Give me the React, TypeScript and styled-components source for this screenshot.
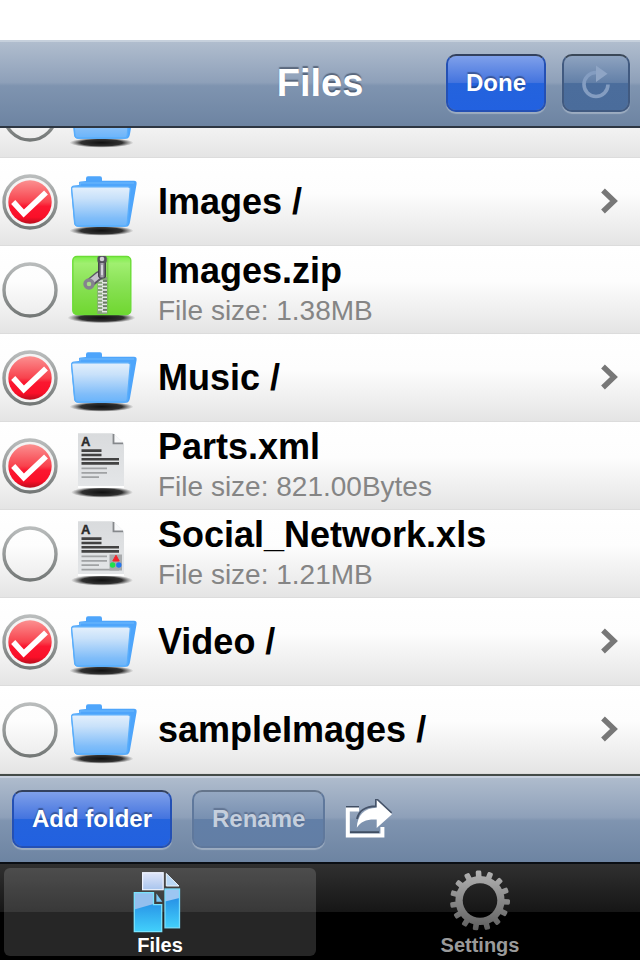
import React, { useState } from "react";
import styled, { createGlobalStyle, css } from "styled-components";

const GlobalStyle = createGlobalStyle`
  * { box-sizing: border-box; }
  body { margin: 0; background: #fff; font-family: "Liberation Sans", Arial, sans-serif; }
  button, input { font-family: inherit; margin: 0; }
`;

const barGradient = css`
  background: linear-gradient(#b0bdce 0%, #8ea0b9 48%, #7f94b0 52%, #6d84a2 100%);
`;

const Screen = styled.div`
  display: flex;
  flex-direction: column;
  height: 100vh;
  padding-top: 40px;
`;

const NavBar = styled.header`
  ${barGradient}
  flex: none;
  display: grid;
  grid-template-columns: 1fr auto 1fr;
  align-items: center;
  height: 88px;
  padding: 0 10px 2px;
  border-top: 2px solid #c6d0dc;
  border-bottom: 2px solid #2d3642;
`;

const Title = styled.h1`
  grid-column: 2;
  margin: 0;
  font-size: 38px;
  line-height: 44px;
  color: #fff;
  text-shadow: 0 -2px 1px rgba(50, 62, 82, 0.6);
`;

const NavActions = styled.div`
  display: flex;
  justify-content: flex-end;
  gap: 16px;
`;

type Tone = "primary" | "plain";

const BarButton = styled.button<{ $tone: Tone; $compact?: boolean }>`
  display: flex;
  align-items: center;
  justify-content: center;
  height: 58px;
  padding: ${(p) => (p.$compact ? "0 17px" : "0 18px")};
  border: 2px solid ${(p) => (p.$tone === "primary" ? "#2450b4" : "#415a80")};
  border-top-color: ${(p) => (p.$tone === "primary" ? "#33415e" : "#3b4858")};
  border-radius: 10px;
  background: ${(p) =>
    p.$tone === "primary"
      ? "linear-gradient(#7fa0ea 0%, #4474df 49%, #2463dd 51%, #2261e0 100%)"
      : "linear-gradient(#8ea3c0 0%, #6380a8 49%, #4b6d9c 51%, #4a6c9b 100%)"};
  background-clip: padding-box;
  box-shadow: 0 2px 1px rgba(255, 255, 255, 0.3);
  color: #fff;
  font-size: 24px;
  font-weight: bold;
  line-height: 28px;
  text-shadow: 0 -2px 1px rgba(30, 45, 80, 0.5);

  &:disabled {
    border-color: #5f789c;
    border-top-color: #65758b;
    background: linear-gradient(#95a8c2 0%, #7890b1 49%, #627fa7 51%, #627ea5 100%);
    background-clip: padding-box;
    color: #c5cfdd;
    text-shadow: 0 -2px 1px rgba(50, 65, 95, 0.4);
  }
`;

const FileList = styled.ul`
  flex: 1;
  min-height: 0;
  display: flex;
  flex-direction: column;
  justify-content: flex-end;
  overflow: hidden;
  margin: 0;
  padding: 0;
  list-style: none;
`;

const Row = styled.li`
  flex: none;
  display: grid;
  grid-template-columns: 56px 74px 1fr auto;
  column-gap: 8px;
  align-items: center;
  height: 88px;
  padding: 0 20px 0 2px;
  background: linear-gradient(#fff 0%, #fdfdfd 40%, #e4e4e4 100%);
  box-shadow: inset 0 -1px 0 #dcdcdc;
`;

const CheckCell = styled.span`
  display: grid;

  & > * { grid-area: 1 / 1; }
`;

const CheckInput = styled.input`
  appearance: none;
  width: 56px;
  height: 56px;
  border-radius: 50%;
`;

const CheckFace = styled.svg`
  pointer-events: none;
`;

const RowText = styled.label`
  display: flex;
  flex-direction: column;
  gap: 2px;
  padding-left: 10px;
  white-space: nowrap;
`;

const FileName = styled.span`
  font-size: 36px;
  font-weight: bold;
  line-height: 40px;
  color: #000;
`;

const FileSize = styled.span`
  font-size: 28px;
  line-height: 36px;
  color: #858585;
`;

const Toolbar = styled.div`
  ${barGradient}
  flex: none;
  display: flex;
  align-items: center;
  gap: 20px;
  height: 90px;
  padding: 0 12px;
  border-top: 2px solid #444b48;
  border-bottom: 2px solid #0a0e14;
  box-shadow: inset 0 2px 0 #c8d1df;
`;

const IconButton = styled.button`
  display: flex;
  padding: 0;
  border: 0;
  background: none;
`;

const TabBar = styled.nav`
  flex: none;
  display: grid;
  grid-template-columns: 1fr 1fr;
  height: 96px;
  background: linear-gradient(#303030 0%, #161616 50%, #000 50%, #000 100%);
`;

const Tab = styled.a<{ $active: boolean }>`
  display: flex;
  flex-direction: column;
  align-items: center;
  margin: 4px;
  padding-top: 2px;
  border-radius: 6px;
  background: ${(p) => (p.$active ? "rgba(255, 255, 255, 0.15)" : "none")};
  color: ${(p) => (p.$active ? "#fff" : "#9a9a9a")};
  font-size: 20px;
  font-weight: bold;
  line-height: 22px;
  text-decoration: none;
`;

const Defs = () => (
  <svg width="0" height="0" display="block" aria-hidden="true">
    <defs>
      <linearGradient id="ring" x1="0" y1="0" x2="0" y2="1">
        <stop offset="0" stopColor="#b9bcbc" />
        <stop offset="1" stopColor="#747877" />
      </linearGradient>
      <linearGradient id="red" x1="0" y1="0" x2="0" y2="1">
        <stop offset="0" stopColor="#fb9090" />
        <stop offset="0.5" stopColor="#f8424d" />
        <stop offset="0.6" stopColor="#fb1730" />
        <stop offset="0.85" stopColor="#fa0f28" />
        <stop offset="1" stopColor="#b80d1c" />
      </linearGradient>
      <linearGradient id="folderFront" x1="0" y1="0" x2="0" y2="1">
        <stop offset="0" stopColor="#e4f0fc" />
        <stop offset="0.3" stopColor="#c8e1fa" />
        <stop offset="0.8" stopColor="#80bdf9" />
        <stop offset="1" stopColor="#6ab4fb" />
      </linearGradient>
      <radialGradient id="shadow">
        <stop offset="0" stopColor="#111" />
        <stop offset="0.65" stopColor="#1c1c1c" stopOpacity="0.9" />
        <stop offset="1" stopColor="#444" stopOpacity="0" />
      </radialGradient>
      <linearGradient id="zipBody" x1="0" y1="0" x2="0" y2="1">
        <stop offset="0" stopColor="#7df04a" />
        <stop offset="0.12" stopColor="#a0ef70" />
        <stop offset="0.5" stopColor="#88e154" />
        <stop offset="1" stopColor="#70d731" />
      </linearGradient>
      <linearGradient id="metal" x1="0" y1="0" x2="1" y2="0">
        <stop offset="0" stopColor="#494653" />
        <stop offset="0.5" stopColor="#bbb8c2" />
        <stop offset="1" stopColor="#3c3844" />
      </linearGradient>
      <linearGradient id="paper" x1="0" y1="0" x2="0" y2="1">
        <stop offset="0" stopColor="#d9dbdd" />
        <stop offset="1" stopColor="#e4e6e8" />
      </linearGradient>
      <linearGradient id="gear" x1="0" y1="0" x2="0" y2="1">
        <stop offset="0" stopColor="#b4b4b4" />
        <stop offset="1" stopColor="#5c5c5c" />
      </linearGradient>
      <linearGradient id="pageBlue" x1="0" y1="0" x2="0" y2="1">
        <stop offset="0" stopColor="#1f7fe0" />
        <stop offset="1" stopColor="#42d0fb" />
      </linearGradient>
      <linearGradient id="pageLight" x1="0" y1="0" x2="0" y2="1">
        <stop offset="0" stopColor="#dfe5f8" />
        <stop offset="1" stopColor="#a9c5ee" />
      </linearGradient>
    </defs>
  </svg>
);

const CheckGraphic = ({ on }: { on: boolean }) => (
  <CheckFace width="56" height="56" viewBox="0 0 56 56" aria-hidden="true">
    <circle cx="28" cy="28" r="26" fill={on ? "#f4f4f4" : "none"} stroke="url(#ring)" strokeWidth="3.4" />
    {on && (
      <>
        <circle cx="28" cy="28" r="21.7" fill="url(#red)" />
        <path d="M11.2 28 L21.7 39.5 L44 18.5" fill="none" stroke="#fff" strokeWidth="5.6" />
      </>
    )}
  </CheckFace>
);

const FolderIcon = () => (
  <svg width="74" height="88" viewBox="0 0 74 88" aria-hidden="true">
    <ellipse cx="35.5" cy="72.7" rx="32" ry="5" fill="url(#shadow)" />
    <path
      d="M5 31 Q5 27.5 8 27.5 L13 27 V24.5 Q13 23.5 15 23.5 L20 23 V20.5 Q20 18.3 22 18.3 H34 Q36 18.3 36 20.5 V22.7 H68 Q71 22.7 70.6 26 L64 64 Q63.3 68.7 60 68.7 H12 Q8.5 68.7 8 65 Z"
      fill="#4ea5fb"
    />
    <path d="M14 27.5 V25 H68" fill="none" stroke="#6fbafd" strokeWidth="1" />
    <path
      d="M5.7 31 Q5.3 28.8 8 28.8 H62 Q64.6 28.8 64.2 31.5 L61.3 65 Q61 68 58.5 68 H12 Q9.2 68 8.9 65 Z"
      fill="url(#folderFront)"
      stroke="#5aaefb"
      strokeWidth="1.3"
    />
  </svg>
);

const teeth = Array.from({ length: 9 }, (_, i) => 35 + i * 3.6);

const ZipIcon = () => (
  <svg width="74" height="88" viewBox="0 0 74 88" aria-hidden="true">
    <ellipse cx="35.5" cy="71.8" rx="34" ry="5.4" fill="url(#shadow)" />
    <rect x="6.8" y="10.5" width="58" height="58" rx="4" fill="url(#zipBody)" stroke="#6bdc35" strokeWidth="1.4" />
    <path d="M41.8 12 V68" stroke="#6bc83d" strokeWidth="1" />
    <path d="M36.3 31 V68" stroke="#87a47a" strokeWidth="10" />
    {teeth.map((y) => (
      <g key={y} strokeWidth="1.6">
        <path d={`M32 ${y} H37`} stroke="#e4e6e4" />
        <path d={`M36 ${y + 1.8} H41`} stroke="#e4e6e4" />
        <path d={`M37 ${y} H41`} stroke="#6c7669" />
      </g>
    ))}
    <path d="M33 29.5 L24.5 36.5" stroke="#5b5864" strokeWidth="9" strokeLinecap="round" />
    <path d="M32.5 29.5 L24.5 36" stroke="#c4c2cb" strokeWidth="5.5" strokeLinecap="round" />
    <circle cx="23" cy="38" r="4" fill="#a5dd84" stroke="#85828e" strokeWidth="3.4" />
    <rect x="32.6" y="13" width="7" height="19" rx="2" fill="url(#metal)" stroke="#3f3b47" />
    <rect x="31.4" y="10" width="9.4" height="7" rx="2" fill="#55515e" />
    <circle cx="36" cy="13" r="2.3" fill="#d0ced6" />
    <path d="M36 19 V29" stroke="#e5e3ea" strokeWidth="1.5" />
  </svg>
);

const DocumentIcon = ({ chart }: { chart: boolean }) => (
  <svg width="74" height="88" viewBox="0 0 74 88" aria-hidden="true">
    <ellipse cx="36" cy="70.3" rx="31" ry="5.4" fill="url(#shadow)" />
    <path d="M12 11.3 H47 L58 21.3 V66 H12 Z" fill="url(#paper)" />
    <path d="M12 65 H58" stroke="#fff" strokeWidth="2" />
    <path d="M47 11.3 L58 21.3 H47 Z" fill="#f8f9fa" />
    <path d="M47.5 12 V21.3 H57" fill="none" stroke="#85888b" strokeWidth="1.8" />
    <text x="15" y="24" fontFamily="Liberation Sans, sans-serif" fontSize="13" fontWeight="bold" fill="#2b2b2b" stroke="#2b2b2b" strokeWidth="0.4">
      A
    </text>
    <path d="M15.5 28.6 H35.5 M15.5 33 H35.5 M15.5 37.2 H53 M15.5 41.4 H53" stroke="#424242" strokeWidth="2.6" />
    <path d="M15.5 46.3 H41 M15.5 50.8 H41 M15.5 55.2 H33" stroke="#a0a2a4" strokeWidth="1.7" />
    {chart && (
      <>
        <path d="M15.5 59.6 H53" stroke="#a0a2a4" strokeWidth="1.7" />
        <rect x="43.5" y="44.5" width="12.5" height="16" fill="#a8aaac" />
        <path d="M50 45.2 L53.2 51 H46.8 Z" fill="#f3222a" stroke="#f3222a" strokeWidth="1" strokeLinejoin="round" />
        <circle cx="46.6" cy="55" r="2.7" fill="#1fe04a" />
        <circle cx="52.8" cy="55" r="2.7" fill="#2476f0" />
      </>
    )}
  </svg>
);

const Chevron = () => (
  <svg width="20" height="28" viewBox="0 0 20 28" aria-hidden="true">
    <path d="M3 2.5 L14 13 L3 23.5" fill="none" stroke="#777" strokeWidth="5.4" />
  </svg>
);

const RefreshIcon = () => (
  <svg width="30" height="36" viewBox="0 0 30 36" aria-hidden="true">
    <path d="M27 19.5 A12 12 0 1 1 15 7.5" fill="none" stroke="#849dc1" strokeWidth="3.6" />
    <path d="M15 0.5 L26.5 8.7 L15 17 Z" fill="#8fa5c5" />
  </svg>
);

const ShareIcon = () => (
  <svg width="48" height="40" viewBox="0 0 48 40" aria-hidden="true">
    <path d="M14 8 H1 M5 33.2 H34" fill="none" stroke="#3f4d62" strokeWidth="2" />
    <path d="M12 20 C14 11 20 7.5 31 7.2 V-0.5 L46.5 14" fill="none" stroke="#46546a" strokeWidth="2" />
    <path d="M14 10.5 H2.8 V36.4 H37.4 V28" fill="none" stroke="#fff" strokeWidth="4" />
    <path d="M31.7 1 L47 15.2 L31.7 29 V20.5 C22 20 16 22 11.8 28.8 C12.5 16.5 19 9 31.7 8.8 Z" fill="#fff" />
  </svg>
);

const FilesIcon = () => (
  <svg width="56" height="64" viewBox="0 0 56 64" aria-hidden="true">
    <rect x="10.6" y="2.7" width="20.6" height="17" fill="url(#pageLight)" stroke="#eef3ff" strokeWidth="1.2" />
    <path d="M34.3 3.5 L47 16 H34.3 Z" fill="#b9d8f6" stroke="#e8f5ff" />
    <rect x="33" y="19" width="14.5" height="38.8" fill="url(#pageBlue)" />
    <path d="M33 19 H47.5 V28 L33 31.5 Z" fill="#9cc6f2" />
    <rect x="33" y="19" width="14.5" height="38.8" fill="none" stroke="#79dcfb" strokeWidth="1.3" />
    <path d="M2.3 22.6 H21.5 V34.6 H29.7 V61.6 H2.3 Z" fill="url(#pageBlue)" />
    <path d="M2.3 22.6 H21.5 V34 L2.3 39.5 Z" fill="#93bfee" />
    <path d="M2.3 22.6 H21.5 V34.6 H29.7 V61.6 H2.3 Z" fill="none" stroke="#79e3fd" strokeWidth="1.3" />
    <path d="M24.4 23.5 L30.3 31.8 H24.4 Z" fill="#7cc8f5" />
  </svg>
);

const gearTeeth = Array.from({ length: 15 }, (_, i) => i * 24 - 3);

const GearIcon = () => (
  <svg width="62" height="64" viewBox="0 0 62 64" aria-hidden="true">
    <mask id="gearMask">
      <circle cx="31" cy="30.5" r="24.6" fill="#fff" />
      {gearTeeth.map((a) => (
        <rect key={a} x="28.2" y="0.5" width="5.6" height="8" rx="1.5" fill="#fff" transform={`rotate(${a} 31 30.5)`} />
      ))}
      <circle cx="31" cy="30.5" r="17.3" fill="#000" />
    </mask>
    <rect width="62" height="62" fill="url(#gear)" mask="url(#gearMask)" />
  </svg>
);

type Kind = "folder" | "zip" | "text" | "sheet";

interface Entry {
  id: string;
  name?: string;
  kind: Kind;
  size?: string;
  checked: boolean;
}

const entries: Entry[] = [
  { id: "first", kind: "folder", checked: false },
  { id: "images", name: "Images /", kind: "folder", checked: true },
  { id: "images-zip", name: "Images.zip", kind: "zip", size: "1.38MB", checked: false },
  { id: "music", name: "Music /", kind: "folder", checked: true },
  { id: "parts", name: "Parts.xml", kind: "text", size: "821.00Bytes", checked: true },
  { id: "social", name: "Social_Network.xls", kind: "sheet", size: "1.21MB", checked: false },
  { id: "video", name: "Video /", kind: "folder", checked: true },
  { id: "samples", name: "sampleImages /", kind: "folder", checked: false },
];

const EntryIcon = ({ kind }: { kind: Kind }) => {
  if (kind === "folder") return <FolderIcon />;
  if (kind === "zip") return <ZipIcon />;
  return <DocumentIcon chart={kind === "sheet"} />;
};

const FileRow = ({ entry }: { entry: Entry }) => {
  const [checked, setChecked] = useState(entry.checked);
  return (
    <Row>
      <CheckCell>
        <CheckInput
          type="checkbox"
          id={entry.id}
          aria-label={entry.name ? undefined : "Folder"}
          checked={checked}
          onChange={(e) => setChecked(e.target.checked)}
        />
        <CheckGraphic on={checked} />
      </CheckCell>
      <EntryIcon kind={entry.kind} />
      <RowText htmlFor={entry.id}>
        {entry.name && <FileName>{entry.name}</FileName>}
        {entry.size && <FileSize>File size: {entry.size}</FileSize>}
      </RowText>
      {entry.kind === "folder" && <Chevron />}
    </Row>
  );
};

export default function App() {
  return (
    <>
      <GlobalStyle />
      <Defs />
      <Screen>
        <NavBar>
          <Title>Files</Title>
          <NavActions>
            <BarButton type="button" $tone="primary">Done</BarButton>
            <BarButton type="button" $tone="plain" $compact aria-label="Refresh">
              <RefreshIcon />
            </BarButton>
          </NavActions>
        </NavBar>
        <FileList>
          {entries.map((entry) => (
            <FileRow key={entry.id} entry={entry} />
          ))}
        </FileList>
        <Toolbar>
          <BarButton type="button" $tone="primary">Add folder</BarButton>
          <BarButton type="button" $tone="plain" disabled>Rename</BarButton>
          <IconButton type="button" aria-label="Share">
            <ShareIcon />
          </IconButton>
        </Toolbar>
        <TabBar>
          <Tab href="#files" $active aria-current="page">
            <FilesIcon />
            Files
          </Tab>
          <Tab href="#settings" $active={false}>
            <GearIcon />
            Settings
          </Tab>
        </TabBar>
      </Screen>
    </>
  );
}
